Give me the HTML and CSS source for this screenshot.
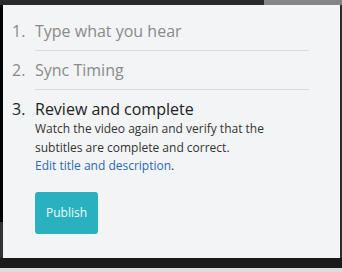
FILE: index.html
```html
<!DOCTYPE html>
<html lang="en">

<head>
    <meta charset="UTF-8">
    <meta name="viewport" content="width=device-width, initial-scale=1.0">
    <title>Subtitle steps</title>
    <link rel="stylesheet" href="styles.css">
</head>

<body>
    <div class="top-strip">
        <div class="top-dark"></div>
        <div class="top-gray"></div>
    </div>
    <div class="middle">
        <div class="left-edge"></div>
        <div class="panel">
            <ol class="steps">
                <li class="step done">
                    <span class="num">1.</span>
                    <div class="body">
                        <div class="title">Type what you hear</div>
                    </div>
                </li>
                <li class="step done">
                    <span class="num">2.</span>
                    <div class="body">
                        <div class="title">Sync Timing</div>
                    </div>
                </li>
                <li class="step current">
                    <span class="num">3.</span>
                    <div class="body">
                        <div class="title">Review and complete</div>
                        <p class="desc">Watch the video again and verify that the subtitles are complete and correct.</p>
                        <p class="desc"><a href="#">Edit title and description</a>.</p>
                        <button class="publish">Publish</button>
                    </div>
                </li>
            </ol>
        </div>
        <div class="right-edge"></div>
    </div>
    <div class="bottom-bar"></div>
    <div class="base"></div>
</body>

</html>
```

FILE: styles.css
```css
body {
    margin: 0;
    background: #1a1a1a;
    font-family: "Open Sans", sans-serif;
    overflow: hidden;
}

.top-strip {
    display: flex;
    height: 5px;
}

.top-dark {
    flex: 1;
    background: #2b2b2b;
}

.top-gray {
    width: 78px;
    background: #858585;
}

.middle {
    display: flex;
    height: 253px;
}

.left-edge {
    width: 3px;
    background: linear-gradient(#000 0, #000 217px, #333 217px);
}

.right-edge {
    width: 2px;
    background: #2b2b2b;
}

.panel {
    flex: 1;
    background: #f3f4f6;
    padding: 0 31px 0 9px;
}

.steps {
    list-style: none;
    margin: 0;
    padding: 0;
}

.step {
    display: flex;
}

.num {
    width: 23px;
    flex: none;
}

.step.done {
    color: #8a8a8a;
    font-size: 16px;
    line-height: 24px;
}

.step.done .num {
    padding-top: 7px;
}

.step.done:first-child .num {
    padding-top: 14px;
}

.step.done .body {
    flex: 1;
    padding: 7px 0;
    border-bottom: 1px solid #dcdcdc;
}

.step.done:first-child .body {
    padding-top: 14px;
}

.step.current {
    color: #222;
    font-size: 16px;
    line-height: 22px;
    padding-top: 8px;
}

.desc {
    margin: 0;
    font-size: 12px;
    line-height: 18.5px;
    color: #333;
}

.desc a {
    color: #2a6aae;
    text-decoration: none;
}

.publish {
    margin-top: 16px;
    width: 63px;
    height: 42px;
    border: none;
    border-radius: 3px;
    background: #2ab1bf;
    color: #eef9fa;
    font-family: "Open Sans", sans-serif;
    font-size: 12px;
    padding: 0;
    cursor: pointer;
}

.bottom-bar {
    height: 10px;
    background: #1a1a1a;
}

.base {
    height: 4px;
    background: #dcdcdc;
}
```
